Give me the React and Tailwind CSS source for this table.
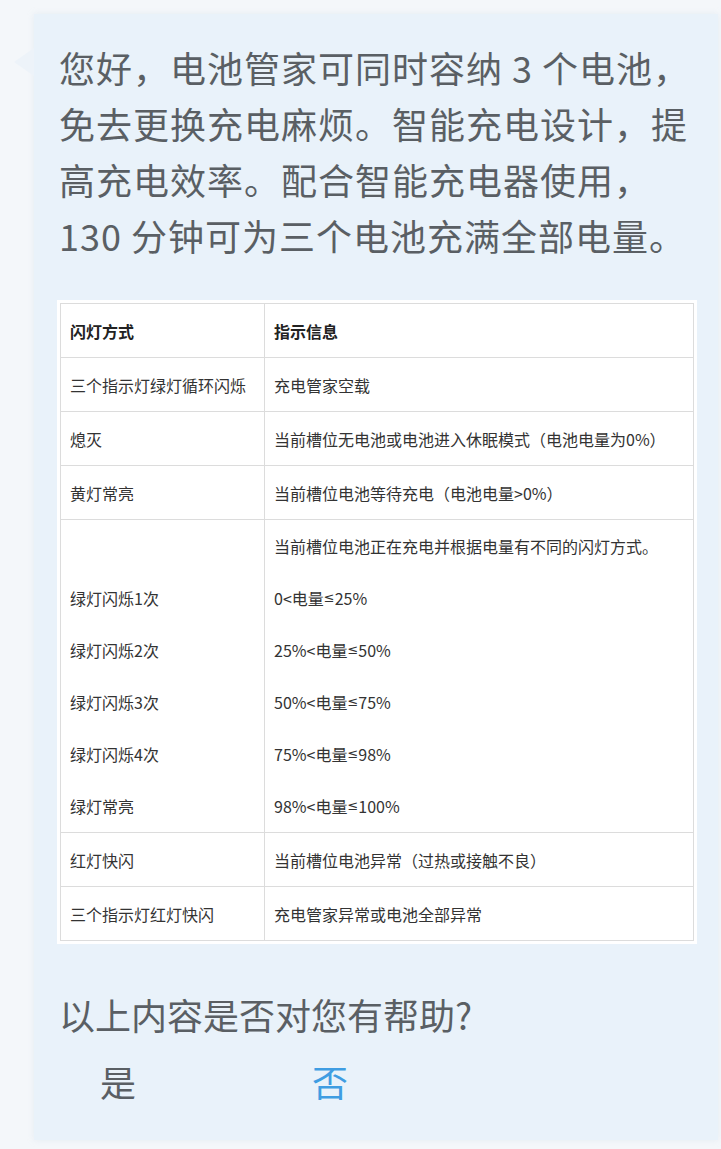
import React from "react";

const rows = [
  ["三个指示灯绿灯循环闪烁", "充电管家空载"],
  ["熄灭", "当前槽位无电池或电池进入休眠模式（电池电量为0%）"],
  ["黄灯常亮", "当前槽位电池等待充电（电池电量>0%）"],
];

const blinkLeft = ["", "绿灯闪烁1次", "绿灯闪烁2次", "绿灯闪烁3次", "绿灯闪烁4次", "绿灯常亮"];
const blinkRight = [
  ["当前槽位电池正在充电并根据电量有不同的闪灯方式。"],
  ["0<电量", "25%"],
  ["25%<电量", "50%"],
  ["50%<电量", "75%"],
  ["75%<电量", "98%"],
  ["98%<电量", "100%"],
];

const tail = [
  ["红灯快闪", "当前槽位电池异常（过热或接触不良）"],
  ["三个指示灯红灯快闪", "充电管家异常或电池全部异常"],
];

function Cell({ children, bold }) {
  return (
    <td
      className={`border border-[#dcdcdc] h-[54px] pl-[9px] pr-2 align-middle ${
        bold ? "font-bold text-[#222]" : "text-[#333]"
      }`}
    >
      {children}
    </td>
  );
}

export default function App() {
  return (
    <div className="min-h-screen bg-[#f4f7fa] pt-[14px] pb-[8px] pl-[34px] pr-[3px] font-['Noto_Sans_CJK_SC','Noto_Sans',sans-serif]">
      <div className="relative bg-[#e9f2fa] pl-[23px] pr-[21px] pt-[25px] pb-[31px] shadow-[0_0_6px_rgba(200,215,230,0.35)]">
        {/* bubble tail */}
        <div className="absolute left-[-20px] top-[34px] w-0 h-0 border-y-[14px] border-y-transparent border-r-[20px] border-r-[#edf3f9]" />

        <p className="pl-[2px] text-[36px] leading-[56px] tracking-[1px] text-[#5a5f64]">
          您好，电池管家可同时容纳 3 个电池，免去更换充电麻烦。智能充电设计，提高充电效率。配合智能充电器使用，130 分钟可为三个电池充满全部电量。
        </p>

        {/* indicator table */}
        <div className="mt-[37px] bg-white p-[3px]">
          <table className="w-full border-collapse text-[16px] leading-[20px]">
            <colgroup>
              <col className="w-[204px]" />
              <col />
            </colgroup>
            <tbody>
              <tr>
                <Cell bold>闪灯方式</Cell>
                <Cell bold>指示信息</Cell>
              </tr>
              {rows.map(([a, b]) => (
                <tr key={a}>
                  <Cell>{a}</Cell>
                  <Cell>{b}</Cell>
                </tr>
              ))}
              <tr>
                <td className="border border-[#dcdcdc] pl-[9px] text-[#333]">
                  <div className="flex flex-col">
                    {blinkLeft.map((t, i) => (
                      <div key={i} className="h-[52px] flex items-center">
                        {t}
                      </div>
                    ))}
                  </div>
                </td>
                <td className="border border-[#dcdcdc] pl-[9px] text-[#333]">
                  <div className="flex flex-col">
                    {blinkRight.map(([a, b], i) => (
                      <div key={i} className="h-[52px] flex items-center">
                        {a}
                        {b && (
                          <>
                            <span className="font-['DejaVu_Sans',sans-serif] text-[13px]">≤</span>
                            {b}
                          </>
                        )}
                      </div>
                    ))}
                  </div>
                </td>
              </tr>
              {tail.map(([a, b]) => (
                <tr key={a}>
                  <Cell>{a}</Cell>
                  <Cell>{b}</Cell>
                </tr>
              ))}
            </tbody>
          </table>
        </div>

        <p className="mt-[42px] pl-[2px] text-[36px] leading-[56px] text-[#5a5f64]">
          以上内容是否对您有帮助?
        </p>

        <div className="mt-[11px] flex text-[36px] leading-[56px]">
          <button className="ml-[43px] text-[#5a5f64]">是</button>
          <button className="ml-[176px] text-[#3f9de2]">否</button>
        </div>
      </div>
    </div>
  );
}
